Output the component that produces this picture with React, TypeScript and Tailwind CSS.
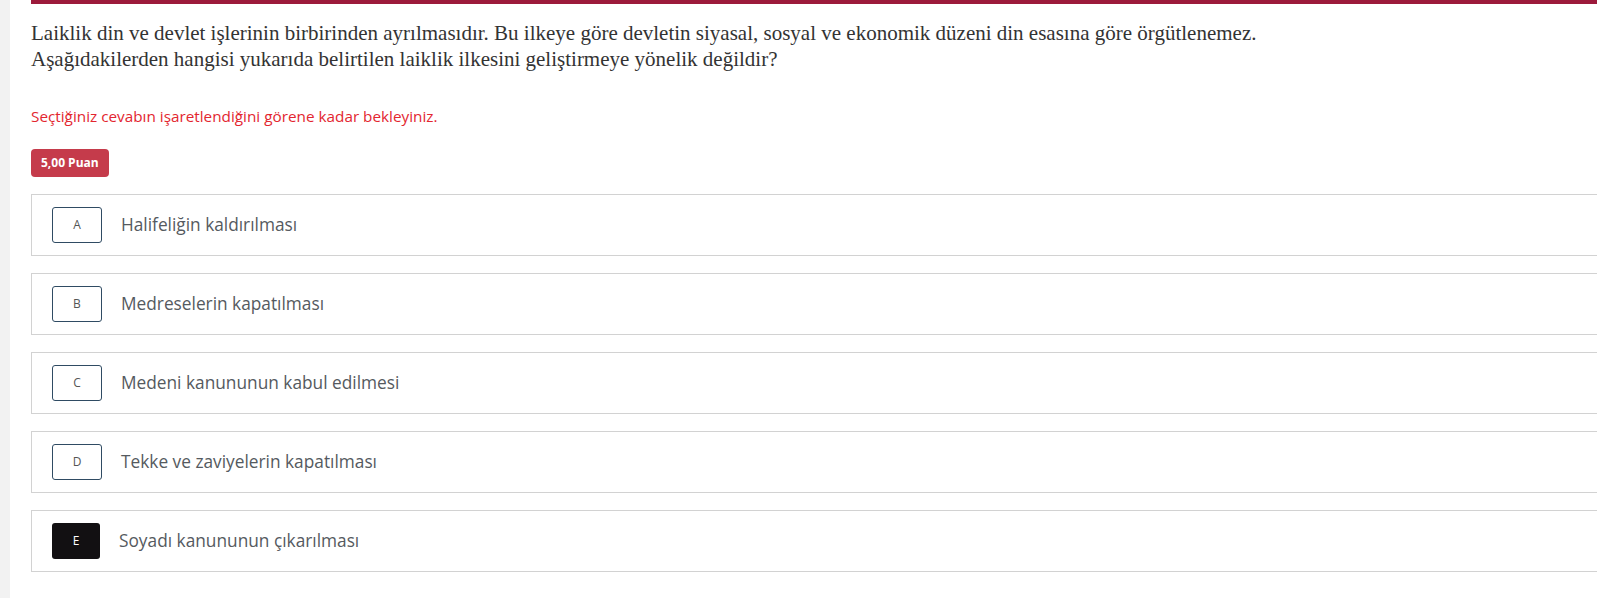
import React from 'react';

const options = [
  { key: 'A', text: 'Halifeliğin kaldırılması' },
  { key: 'B', text: 'Medreselerin kapatılması' },
  { key: 'C', text: 'Medeni kanununun kabul edilmesi' },
  { key: 'D', text: 'Tekke ve zaviyelerin kapatılması' },
  { key: 'E', text: 'Soyadı kanununun çıkarılması', selected: true },
];

export default function App() {
  return (
    <div className="flex h-[598px] w-full overflow-hidden bg-white font-['Open_Sans',sans-serif]">
      <div className="w-[10px] shrink-0 bg-[#f2f2f2]" />
      <div className="flex min-w-0 flex-1 flex-col pl-[21px]">
        <div className="h-[4px] w-[1600px] bg-[#9c1a3b]" />
        <div className="mt-[16px] font-['Liberation_Serif',serif] text-[21px] leading-[26px] text-[#333]">
          <p>
            Laiklik din ve devlet işlerinin birbirinden ayrılmasıdır. Bu ilkeye göre devletin siyasal, sosyal ve
            ekonomik düzeni din esasına göre örgütlenemez.
          </p>
          <p>Aşağıdakilerden hangisi yukarıda belirtilen laiklik ilkesini geliştirmeye yönelik değildir?</p>
        </div>
        <p className="mt-[34px] text-[15.3px] leading-[20px] text-[#e3262f]">
          Seçtiğiniz cevabın işaretlendiğini görene kadar bekleyiniz.
        </p>
        <div className="mt-[23px] flex">
          <span className="flex h-[28px] items-center rounded-[4px] bg-[#c53b4b] px-[10px] text-[12px] font-bold text-white">
            5,00 Puan
          </span>
        </div>
        <div className="mt-[17px] flex w-[1620px] flex-col gap-[17px]">
          {options.map((o) => (
            <div key={o.key} className="flex h-[62px] items-center border border-[#d2d2d2] pl-[20px]">
              {o.selected ? (
                <span className="flex h-[36px] w-[48px] items-center justify-center rounded-[3px] bg-[#121012] text-[12px] text-white">
                  {o.key}
                </span>
              ) : (
                <span className="flex h-[36px] w-[50px] items-center justify-center rounded-[3px] border border-[#2f4b63] text-[12px] text-[#555]">
                  {o.key}
                </span>
              )}
              <span className="ml-[19px] text-[17.3px] text-[#555a60]">{o.text}</span>
            </div>
          ))}
        </div>
      </div>
    </div>
  );
}
